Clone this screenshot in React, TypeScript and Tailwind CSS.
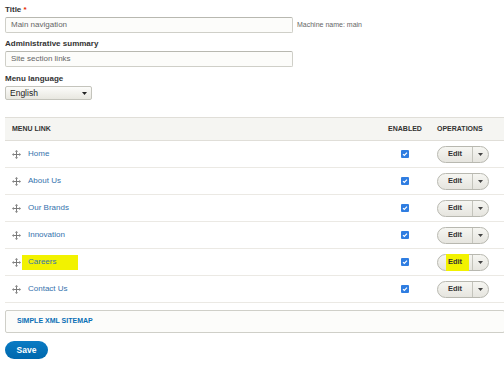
import React from 'react';

const links = ['Home', 'About Us', 'Our Brands', 'Innovation', 'Careers', 'Contact Us'];

function DragIcon() {
  return (
    <svg width="9" height="9" viewBox="0 0 9 9" className="shrink-0">
      <path d="M4.5 1.5v6M1.5 4.5h6" stroke="#7a7a7a" strokeWidth="1" />
      <path d="M4.5 0l1.6 1.8h-3.2zM4.5 9l1.6-1.8h-3.2zM0 4.5l1.8-1.6v3.2zM9 4.5l-1.8-1.6v3.2z" fill="#7a7a7a" />
    </svg>
  );
}

function Checkbox() {
  return (
    <div className="w-[8px] h-[8px] rounded-[1px] bg-[#2f7de1] flex items-center justify-center">
      <svg width="6" height="6" viewBox="0 0 6 6">
        <path d="M1 3.2l1.3 1.3L5 1.6" stroke="#fff" strokeWidth="1.2" fill="none" />
      </svg>
    </div>
  );
}

function EditButton({ marked }: { marked?: boolean }) {
  return (
    <div className="flex h-[17px] w-[52px] rounded-full border border-[#b8b8b0] bg-gradient-to-b from-[#f6f6f2] to-[#e6e5df] text-[7.5px] font-bold text-[#333]">
      <div className="relative flex-1 flex items-center justify-center border-r border-[#c4c4bc]">
        {marked && <span className="absolute left-[8px] right-[3px] -top-[1px] -bottom-[1px] bg-[#f2f200]" />}
        <span className="relative">Edit</span>
      </div>
      <div className="w-[15px] flex items-center justify-center">
        <svg width="5" height="3" viewBox="0 0 5 3">
          <path d="M0 0h5L2.5 3z" fill="#444" />
        </svg>
      </div>
    </div>
  );
}

export default function App() {
  return (
    <div className="w-[504px] h-[383px] overflow-hidden bg-white font-['Liberation_Sans',Arial,sans-serif] text-[#333]">
      <div className="w-[500px] ml-[5px] pt-[4px]">
        {/* Title */}
        <div className="text-[8px] font-bold leading-[12px]">
          Title <span className="text-[#e62600]">*</span>
        </div>
        <div className="mt-[1px] flex items-center gap-[4px]">
          <div className="w-[288px] h-[16px] border border-[#cfcfc8] border-t-[#b8b8b0] rounded-[2px] bg-[#fcfcfa] pl-[5px] flex items-center text-[8px] text-[#666]">
            Main navigation
          </div>
          <span className="text-[7px] text-[#666]">Machine name: main</span>
        </div>

        {/* Summary */}
        <div className="mt-[5px] text-[8px] font-bold leading-[12px]">Administrative summary</div>
        <div className="mt-[1px] w-[288px] h-[16px] border border-[#cfcfc8] border-t-[#b8b8b0] rounded-[2px] bg-[#fcfcfa] pl-[5px] flex items-center text-[8px] text-[#666]">
          Site section links
        </div>

        {/* Language */}
        <div className="mt-[6px] text-[8px] font-bold leading-[12px]">Menu language</div>
        <div className="mt-[1px] w-[87px] h-[14px] border border-[#c4c4bc] rounded-[2px] bg-gradient-to-b from-[#fcfcfa] to-[#e8e7e0] pl-[4px] pr-[4px] flex items-center justify-between text-[8.5px] text-[#222]">
          <span>English</span>
          <svg width="5" height="3" viewBox="0 0 5 3">
            <path d="M0 0h5L2.5 3z" fill="#222" />
          </svg>
        </div>

        {/* Menu table */}
        <div className="mt-[17px]">
          <div className="flex items-center h-[24px] border-t border-b border-[#e0ded8] bg-[#f5f5f2] text-[7px] font-bold text-[#333]">
            <div className="flex-1 pl-[7px]">MENU LINK</div>
            <div className="w-[50px] text-center">ENABLED</div>
            <div className="w-[75px] pl-[7px]">OPERATIONS</div>
          </div>
          {links.map((name) => (
            <div key={name} className="flex items-center h-[27px] border-b border-[#ebe9e4]">
              <div className="flex-1 flex items-center pl-[7px]">
                <DragIcon />
                {name === 'Careers' ? (
                  <span className="ml-[1px] h-[15px] pl-[6px] pr-[22px] flex items-start pt-[1px] bg-[#f2f200] text-[8px] text-[#3572ad]">
                    {name}
                  </span>
                ) : (
                  <span className="ml-[7px] text-[8px] text-[#3572ad]">{name}</span>
                )}
              </div>
              <div className="w-[50px] flex justify-center">
                <Checkbox />
              </div>
              <div className="w-[75px] pl-[7px]">
                <EditButton marked={name === 'Careers'} />
              </div>
            </div>
          ))}
        </div>

        {/* Sitemap details */}
        <div className="mt-[7px] h-[23px] border border-[#cfcfc8] rounded-[2px] bg-[#fcfcfa] pl-[11px] flex items-center text-[7px] font-bold text-[#0a6fb5]">
          SIMPLE XML SITEMAP
        </div>

        {/* Save */}
        <button className="mt-[8px] h-[18px] w-[43px] rounded-full bg-gradient-to-b from-[#0a7bc4] to-[#0068ad] text-[8.5px] font-bold text-white flex items-center justify-center">
          Save
        </button>
      </div>
    </div>
  );
}
